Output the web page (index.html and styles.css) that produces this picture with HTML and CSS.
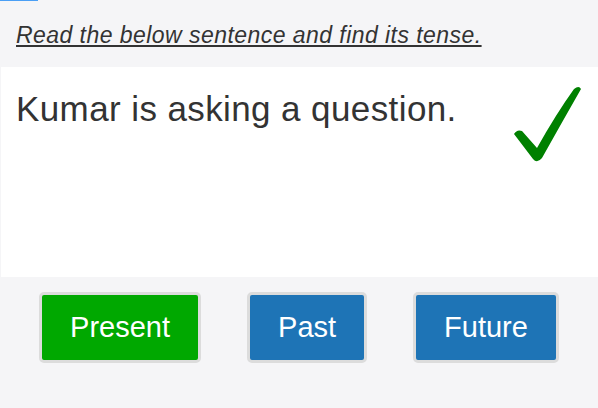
FILE: index.html
```html
<!DOCTYPE html>
<html>
<head>
<meta charset="utf-8">
<link rel="stylesheet" href="styles.css">
</head>
<body>
<div class="topbar"></div>
<div class="page">
  <p class="instruction">Read the below sentence and find its tense.</p>
  <div class="panel">
    <p class="sentence">Kumar is asking a question.</p>
    <svg class="check" width="76" height="80" viewBox="0 0 76 80">
      <path d="M6 50 Q9 45 14 47 L29 64 Q48 30 66 5 Q71 1 73 5 Q53 40 34 74 Q29 80 25 75 Z" fill="#008000"/>
    </svg>
  </div>
  <div class="options">
    <button class="opt correct">Present</button>
    <button class="opt">Past</button>
    <button class="opt">Future</button>
  </div>
</div>
</body>
</html>
```
FILE: styles.css
```css
html, body {
  margin: 0;
  padding: 0;
}
body {
  background: #f5f5f7;
  font-family: "Liberation Sans", Arial, sans-serif;
  color: #333;
  width: 598px;
  height: 408px;
  overflow: hidden;
}
.topbar {
  width: 38px;
  height: 1px;
  background: #4a9ff5;
}
.page {
  display: flex;
  flex-direction: column;
}
.instruction {
  margin: 0;
  padding: 22px 16px 0;
  height: 46px;
  box-sizing: border-box;
  font-size: 23px;
  letter-spacing: 0.45px;
  font-style: italic;
  text-decoration: underline;
  text-underline-offset: 2px;
  line-height: 24px;
}
.panel {
  margin-top: 20px;
  margin-left: 1px;
  height: 210px;
  background: #fff;
  display: flex;
  justify-content: space-between;
  align-items: flex-start;
}
.sentence {
  margin: 0;
  padding: 22px 0 0 15px;
  font-size: 35px;
  letter-spacing: 0.4px;
  line-height: 40px;
}
.check {
  margin: 17px 14px 0 0;
}
.options {
  display: flex;
  justify-content: center;
  gap: 46px;
  padding-top: 15px;
}
.opt {
  height: 71px;
  padding: 0 28px;
  border: 3px solid #dcdcdc;
  border-radius: 5px;
  background: #1e74b6;
  color: #fff;
  font-family: "Liberation Sans", Arial, sans-serif;
  font-size: 29px;
}
.opt.correct {
  background: #00a800;
}
```
